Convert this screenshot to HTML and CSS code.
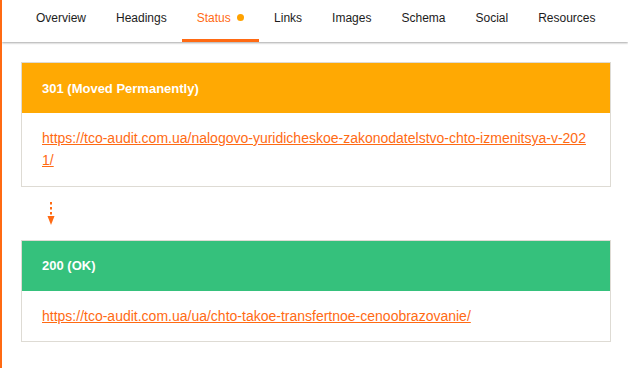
FILE: index.html
```html
<!DOCTYPE html>
<html lang="en">
<head>
  <meta charset="UTF-8" />
  <meta name="viewport" content="width=device-width, initial-scale=1.0"/>
  <title>Status</title>
  <link rel="stylesheet" href="styles.css">
</head>
<body>
  <nav class="tabs">
    <a class="tab">Overview</a>
    <a class="tab">Headings</a>
    <a class="tab active">Status <span class="dot"></span></a>
    <a class="tab">Links</a>
    <a class="tab">Images</a>
    <a class="tab">Schema</a>
    <a class="tab">Social</a>
    <a class="tab">Resources</a>
  </nav>

  <div class="content">
    <div class="card">
      <div class="card-head redirect">301 (Moved Permanently)</div>
      <div class="card-body">
        <a class="url" href="#">https://tco-audit.com.ua/nalogovo-yuridicheskoe-zakonodatelstvo-chto-izmenitsya-v-2021/</a>
      </div>
    </div>

    <div class="hop">
      <svg width="10" height="25" viewBox="0 0 10 25">
        <line x1="5" y1="0" x2="5" y2="14" stroke="#ff6a13" stroke-width="2" stroke-dasharray="2.5 2.5"/>
        <polygon points="1.5,14 8.5,14 5,23" fill="#ff6a13"/>
      </svg>
    </div>

    <div class="card">
      <div class="card-head ok">200 (OK)</div>
      <div class="card-body">
        <a class="url" href="#">https://tco-audit.com.ua/ua/chto-takoe-transfertnoe-cenoobrazovanie/</a>
      </div>
    </div>
  </div>
</body>
</html>
```

FILE: styles.css
```css
html, body {
  margin: 0;
  padding: 0;
  background: #fff;
  font-family: 'Liberation Sans', Arial, sans-serif;
}

body {
  border-left: 2px solid #ff6a13;
  min-height: 100vh;
  box-sizing: border-box;
}

.tabs {
  display: flex;
  height: 42px;
  padding-left: 19px;
  box-shadow: 0 1px 2px rgba(0, 0, 0, 0.35);
}

.tab {
  box-sizing: border-box;
  height: 42px;
  padding: 11px 15px 0;
  font-size: 12px;
  line-height: 15px;
  color: #1c1c1c;
  white-space: nowrap;
}

.tab.active {
  color: #ff6a13;
  border-bottom: 3px solid #ff6a13;
}

.dot {
  display: inline-block;
  width: 7px;
  height: 7px;
  margin-left: 3px;
  border-radius: 50%;
  background: #ffa200;
  vertical-align: 1px;
}

.content {
  padding: 20px 17px 0 19px;
}

.card {
  border: 1px solid #dedbd4;
}

.card-head {
  height: 50px;
  display: flex;
  align-items: center;
  padding: 0 20px;
  color: #fff;
  font-size: 13px;
  font-weight: bold;
}

.redirect {
  background-color: #ffa903;
}

.ok {
  background-color: #35c17c;
}

.card-body {
  padding: 14px 20px;
  font-size: 14px;
  line-height: 22.4px;
}

.url {
  color: #ff6a13;
  text-decoration: underline;
  word-break: break-all;
}

.hop {
  height: 53px;
  padding-left: 25px;
  box-sizing: border-box;
  padding-top: 15px;
}

.hop svg {
  display: block;
}
```
